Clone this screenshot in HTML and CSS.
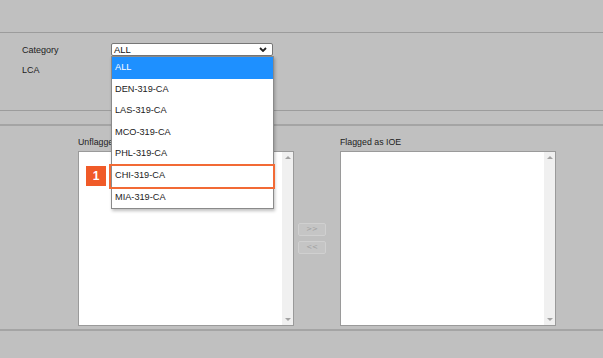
FILE: index.html
```html
<!DOCTYPE html>
<html lang="en">
<head>
    <meta charset="UTF-8">
    <meta name="viewport" content="width=device-width, initial-scale=1.0">
    <title>IOE Flagging</title>
    <link rel="stylesheet" href="styles.css">
</head>
<body>

    <!-- Top bar -->
    <div class="header"></div>

    <!-- Filters -->
    <div class="filters">
        <div class="filter-row">
            <span class="filter-label">Category</span>
            <div class="select">
                <span>ALL</span>
                <svg class="chevron" width="8" height="5" viewBox="0 0 8 5"><path d="M1 1 L4 4 L7 1" fill="none" stroke="#222" stroke-width="1.8"/></svg>
            </div>
        </div>
        <div class="filter-row">
            <span class="filter-label">LCA</span>
        </div>
    </div>

    <div class="band"></div>

    <!-- Lists -->
    <div class="lists">
        <div class="list-col">
            <div class="list-label">Unflagged</div>
            <div class="listbox">
                <div class="list-body"></div>
                <div class="scrollbar">
                    <span class="arrow arrow-up"></span>
                    <span class="arrow arrow-down"></span>
                </div>
            </div>
        </div>
        <div class="move-buttons">
            <button class="move-btn">&gt;&gt;</button>
            <button class="move-btn">&lt;&lt;</button>
        </div>
        <div class="list-col">
            <div class="list-label">Flagged as IOE</div>
            <div class="listbox">
                <div class="list-body"></div>
                <div class="scrollbar">
                    <span class="arrow arrow-up"></span>
                    <span class="arrow arrow-down"></span>
                </div>
            </div>
        </div>
    </div>

    <div class="footer"></div>

    <!-- Open dropdown (overlay) -->
    <ul class="dropdown">
        <li class="option selected">ALL</li>
        <li class="option">DEN-319-CA</li>
        <li class="option">LAS-319-CA</li>
        <li class="option">MCO-319-CA</li>
        <li class="option">PHL-319-CA</li>
        <li class="option">CHI-319-CA</li>
        <li class="option">MIA-319-CA</li>
    </ul>

    <!-- Callout -->
    <div class="highlight"></div>
    <div class="badge">1</div>

</body>
</html>
```

FILE: styles.css
```css
body {
    margin: 0;
    width: 603px;
    height: 358px;
    background-color: #c0c0c0;
    font-family: "Liberation Sans", Arial, sans-serif;
    font-size: 9px;
    color: #222;
    position: relative;
    overflow: hidden;
}

.header {
    height: 32px;
    border-bottom: 1px solid #9c9c9c;
}

.filters {
    height: 78px;
    padding: 10px 0 0 22px;
    box-sizing: border-box;
    border-bottom: 1px solid #9c9c9c;
}

.filter-row {
    display: flex;
    align-items: center;
    height: 13px;
    margin-bottom: 7px;
}

.filter-label {
    width: 89px;
}

.select {
    width: 162px;
    height: 13px;
    box-sizing: border-box;
    background: #fff;
    border: 1px solid #767676;
    border-radius: 2px;
    display: flex;
    align-items: center;
    justify-content: space-between;
    padding: 0 5px 0 2px;
    font-size: 9.5px;
    color: #111;
}

.band {
    height: 13px;
    border-bottom: 2px solid #a4a4a4;
}

.lists {
    display: flex;
    padding: 10px 0 3px 78px;
    border-bottom: 2px solid #a4a4a4;
}

.list-label {
    height: 15px;
    line-height: 12px;
    font-size: 8.8px;
}

.listbox {
    width: 216px;
    height: 175px;
    box-sizing: border-box;
    border: 1px solid #9a9a9a;
    background: #fff;
    display: flex;
}

.list-body {
    flex: 1;
}

.scrollbar {
    width: 11px;
    background: #f0f0f0;
    display: flex;
    flex-direction: column;
    justify-content: space-between;
    align-items: center;
    padding: 4px 0;
}

.arrow {
    width: 0;
    height: 0;
    border-left: 3px solid transparent;
    border-right: 3px solid transparent;
}

.arrow-up { border-bottom: 3px solid #a3a3a3; }
.arrow-down { border-top: 3px solid #a3a3a3; }

.move-buttons {
    width: 46px;
    display: flex;
    flex-direction: column;
    align-items: flex-start;
    gap: 5px;
    padding-top: 87px;
    padding-left: 4px;
    box-sizing: border-box;
}

.move-btn {
    width: 28px;
    height: 13px;
    padding: 0;
    background: #c5c5c5;
    border: 1px solid #d0d0d0;
    border-radius: 2px;
    font-family: "DejaVu Sans", sans-serif;
    font-size: 7px;
    line-height: 11px;
    color: #a0a0a0;
}

.footer {
    height: 27px;
}

/* Open dropdown */
.dropdown {
    position: absolute;
    left: 111px;
    top: 56px;
    width: 163px;
    height: 153px;
    margin: 0;
    padding: 0;
    list-style: none;
    background: #fff;
    border: 1px solid #8a8a8a;
    box-sizing: border-box;
    box-shadow: 1px 2px 3px rgba(0, 0, 0, 0.25);
}

.option {
    height: 21.6px;
    line-height: 21.6px;
    padding-left: 3px;
    font-size: 9.2px;
    color: #222;
}

.option.selected {
    background: #1e90ff;
    color: #fff;
}

.highlight {
    position: absolute;
    left: 109px;
    top: 164px;
    width: 166px;
    height: 25px;
    box-sizing: border-box;
    border: 2px solid #f26a35;
}

.badge {
    position: absolute;
    left: 86px;
    top: 166px;
    width: 20px;
    height: 20px;
    background: #f05a28;
    color: #fff;
    font-weight: bold;
    font-size: 12px;
    line-height: 20px;
    text-align: center;
}
```
